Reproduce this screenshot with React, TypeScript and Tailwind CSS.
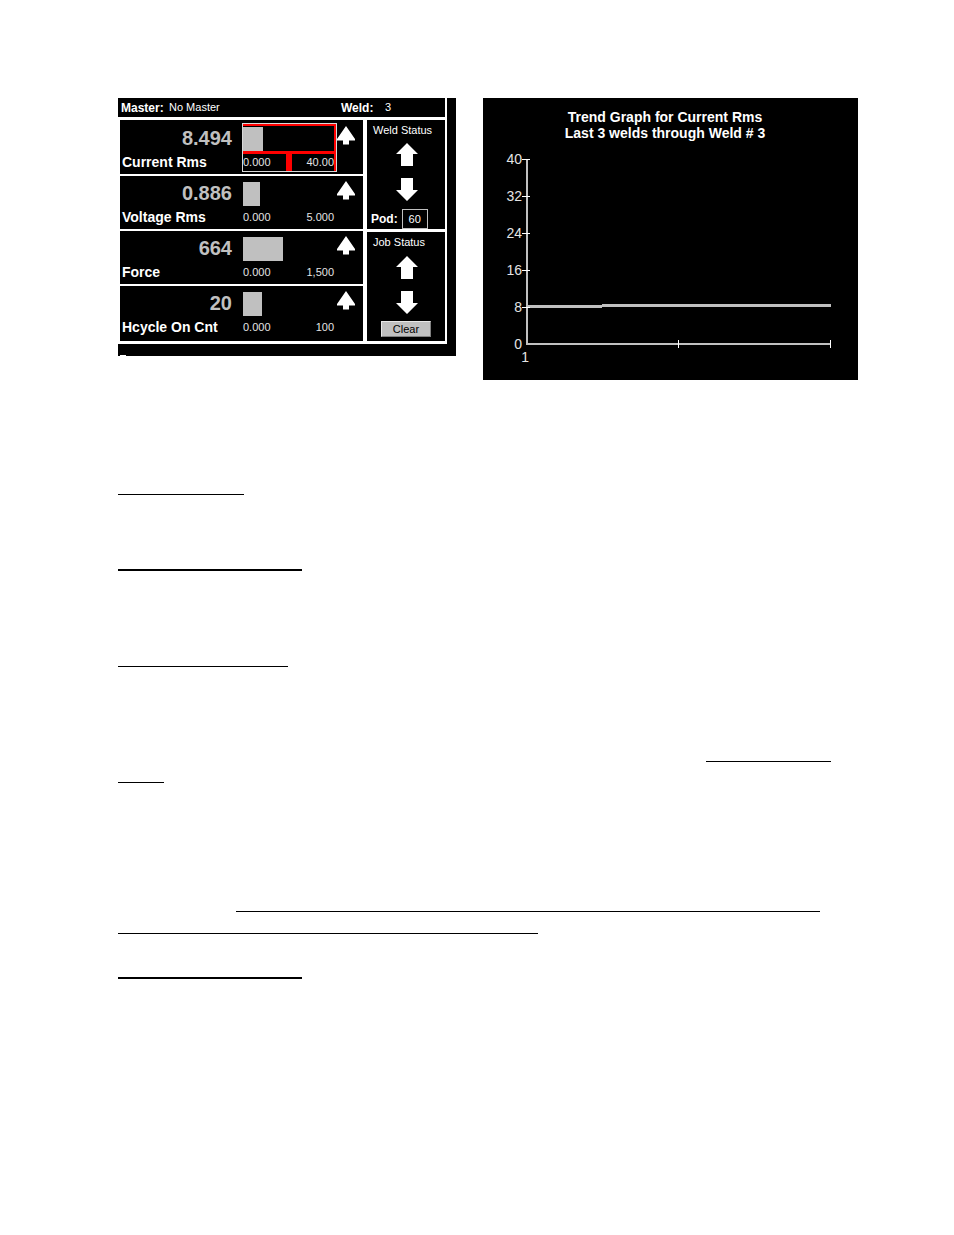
import React from "react";

type Metric = {
  name: string;
  value: string;
  max: string;
  fill: number;
  selected?: boolean;
};

const metrics: Metric[] = [
  { name: "Current Rms", value: "8.494", max: "40.00", fill: 20, selected: true },
  { name: "Voltage Rms", value: "0.886", max: "5.000", fill: 17 },
  { name: "Force", value: "664", max: "1,500", fill: 40 },
  { name: "Hcycle On Cnt", value: "20", max: "100", fill: 19 },
];

function TrendArrow() {
  return (
    <svg className="mt-[5px] h-[19px] w-[18px] shrink-0 fill-white" viewBox="0 0 18 19" aria-hidden="true">
      <path d="M9 0L18 13V14.500H12V18.500H6V14.500H0V13Z" />
    </svg>
  );
}

function StatusArrow({ down = false }: { down?: boolean }) {
  return (
    <svg className="h-[23px] w-[22px] fill-white" viewBox="0 0 22 23" aria-hidden="true">
      <path d={down ? "M5 0H17V12H22L11 23L0 12H5Z" : "M11 0L22 11H17V23H5V11H0Z"} />
    </svg>
  );
}

function MetricRow({ metric, index }: { metric: Metric; index: number }) {
  const frame =
    index === 0
      ? "h-[56px] border-b-2 pt-px"
      : index === metrics.length - 1
        ? "h-[55px]"
        : "h-[55px] border-b-2";
  return (
    <div className={`flex border-white bg-black ${frame}`}>
      <div className="flex w-28 flex-col pt-[5px]">
        <span className="text-right text-xl/6 font-bold text-[#c0c0c0]">{metric.value}</span>
        <span className="pl-0.5 text-sm/6 font-bold whitespace-nowrap text-white">{metric.name}</span>
      </div>
      <div
        className={`mt-0.5 ml-2.5 h-[49px] w-[95px] border ${metric.selected ? "border-[#d8d8d8]" : "border-transparent"}`}
      >
        <div
          className={`flex h-full flex-col border-t-2 border-r-2 ${metric.selected ? "border-[#ff0000]" : "border-transparent"}`}
        >
          <div
            className={`-mr-px border-b-3 pt-px ${metric.selected ? "border-[#ff0000]" : "border-transparent"}`}
          >
            <div className="h-6 bg-[#c0c0c0]" style={{ width: metric.fill }} />
          </div>
          <div className="flex flex-1 justify-between text-[11px]/4 text-[#e4e4e4]">
            <span>0.000</span>
            {metric.selected && <span className="w-1.5 bg-[#ff0000]" />}
            <span>{metric.max}</span>
          </div>
        </div>
      </div>
      <TrendArrow />
    </div>
  );
}

function WeldPanel() {
  return (
    <section className="h-[258px] w-[338px] shrink-0 bg-black pr-[9px]">
      <header className="flex h-[19px] items-center border-r-2 border-white pl-[3px] text-white">
        <span className="w-12 text-xs font-bold">Master:</span>
        <span className="text-[11px]">No Master</span>
        <span className="ml-auto w-11 text-xs font-bold">Weld:</span>
        <span className="w-[60px] text-[11px]">3</span>
      </header>
      <div className="flex gap-1 bg-white px-0.5 py-[3px]">
        <div className="flex-1">
          {metrics.map((m, i) => (
            <MetricRow key={m.name} metric={m} index={i} />
          ))}
        </div>
        <div className="flex w-[78px] flex-col gap-[3px]">
          <div className="flex flex-1 flex-col items-center bg-black text-white">
            <h2 className="self-start pl-1.5 text-[11px]/5 whitespace-nowrap">Weld Status</h2>
            <div className="mt-[3px] flex flex-col gap-3 pl-0.5">
              <StatusArrow />
              <StatusArrow down />
            </div>
            <div className="mt-2 flex h-5 items-center gap-1 self-start pl-1">
              <label htmlFor="pod" className="text-xs font-bold">
                Pod:
              </label>
              <input
                id="pod"
                readOnly
                value="60"
                className="h-5 w-[26px] border border-[#c0c0c0] bg-black text-center text-[11px] text-white"
              />
            </div>
          </div>
          <div className="flex flex-1 flex-col items-center bg-black text-white">
            <h2 className="self-start pl-1.5 text-[11px]/5 whitespace-nowrap">Job Status</h2>
            <div className="mt-1 flex flex-col gap-3 pl-0.5">
              <StatusArrow />
              <StatusArrow down />
            </div>
            <button
              type="button"
              className="mt-[7px] h-4 w-[50px] border border-t-[#e8e8e8] border-r-[#808080] border-b-[#808080] border-l-[#e8e8e8] bg-[#c0c0c0] text-[11px]/[14px] text-black"
            >
              Clear
            </button>
          </div>
        </div>
      </div>
      <div className="flex h-3 items-end pl-0.5">
        <span className="h-px w-1.5 bg-white" />
      </div>
    </section>
  );
}

function TrendGraph() {
  const ticks = [40, 32, 24, 16, 8, 0];
  return (
    <section className="min-w-0 flex-1 bg-black">
      <svg className="block w-full" viewBox="0 0 375 282" role="img" aria-label="Trend Graph for Current Rms">
        <g className="fill-white text-sm font-bold" textAnchor="middle">
          <text x="182" y="24">Trend Graph for Current Rms</text>
          <text x="182" y="40">Last 3 welds through Weld # 3</text>
        </g>
        <g className="fill-[#e4e4e4] text-sm" textAnchor="end">
          {ticks.map((t, i) => (
            <text key={t} x="39" y={66 + i * 37}>
              {t}
            </text>
          ))}
          <text x="46" y="264">1</text>
        </g>
        <g className="fill-[#c0c0c0]">
          <rect x="43" y="61" width="2" height="186" />
          <rect x="43" y="245" width="305" height="2" />
          <rect x="43" y="207" width="76" height="3" />
          <rect x="119" y="206" width="229" height="3" />
        </g>
        <g className="fill-white">
          {ticks.slice(0, 5).map((t, i) => (
            <rect key={t} x="39" y={61 + i * 37} width="8" height="1" />
          ))}
          <rect x="195" y="242" width="1" height="8" />
          <rect x="347" y="242" width="1" height="8" />
        </g>
      </svg>
    </section>
  );
}

export default function App() {
  return (
    <main className="min-h-screen bg-white pt-[98px] pr-24 pb-24 pl-[118px] font-['Liberation_Sans',Arial,sans-serif]">
      <div className="flex items-start gap-[27px]">
        <WeldPanel />
        <TrendGraph />
      </div>
      <div className="mt-[114px] flex flex-col">
        <hr className="w-[126px] border-t border-black" />
        <hr className="mt-[74px] w-[184px] border-t-2 border-black" />
        <hr className="mt-[95px] w-[170px] border-t border-black" />
        <hr className="mt-[94px] mr-[27px] w-[125px] self-end border-t border-black" />
        <hr className="mt-5 w-[46px] border-t border-black" />
        <hr className="mt-32 mr-[38px] ml-[118px] border-t border-black" />
        <hr className="mt-[21px] w-[420px] border-t border-black" />
        <hr className="mt-[43px] w-[184px] border-t-2 border-black" />
      </div>
    </main>
  );
}
